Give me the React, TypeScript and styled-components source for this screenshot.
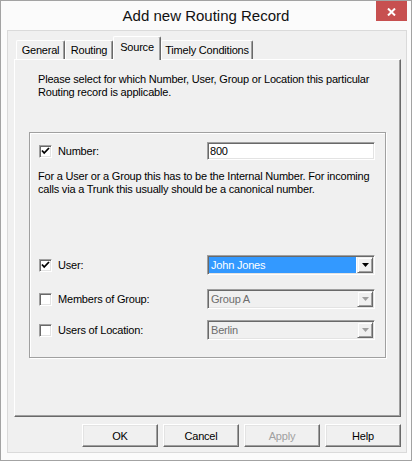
import React from "react";
import styled, { createGlobalStyle } from "styled-components";

const GlobalStyle = createGlobalStyle`
  html, body {
    margin: 0;
    padding: 0;
    background: #ffffff;
  }
  body {
    font-family: "Liberation Sans", Arial, sans-serif;
  }
`;

const Window = styled.div`
  position: relative;
  width: 412px;
  height: 461px;
  box-sizing: border-box;
  border: 1px solid #a3a3a3;
  background: #fbfbfb;
  display: flex;
  flex-direction: column;
  font-family: "Liberation Sans", Arial, sans-serif;
  font-size: 11px;
  letter-spacing: -0.2px;
  color: #000;
`;

const TitleBar = styled.div`
  flex: none;
  height: 29px;
  display: flex;
  align-items: center;
  justify-content: center;
  font-size: 15px;
  letter-spacing: 0;
  color: #111;
`;

const CloseButton = styled.div`
  position: absolute;
  top: 0;
  right: 4px;
  width: 31px;
  height: 20px;
  background: #c75050;
  display: flex;
  align-items: center;
  justify-content: center;
  padding-top: 2px;
  box-sizing: border-box;
`;

const Client = styled.div`
  flex: 1;
  margin: 0 4px 7px 6px;
  border: 1px solid #dadada;
  background: #f0f0f0;
  padding: 5px 5px 5px 6px;
  display: flex;
  flex-direction: column;
`;

const TabStrip = styled.div`
  flex: none;
  height: 23px;
  display: flex;
  align-items: flex-end;
  padding-left: 2px;
  position: relative;
  z-index: 1;
`;

const Tab = styled.div<{ $active?: boolean; $w: number }>`
  width: ${(p) => p.$w}px;
  height: ${(p) => (p.$active ? 24 : 19)}px;
  margin-bottom: ${(p) => (p.$active ? -1 : 0)}px;
  box-sizing: border-box;
  border-top: 1px solid #ffffff;
  border-left: 1px solid #ffffff;
  border-right: 1px solid #696969;
  border-radius: 2px 2px 0 0;
  box-shadow: inset -1px 0 #a0a0a0;
  background: #f0f0f0;
  display: flex;
  align-items: center;
  justify-content: center;
  padding-bottom: ${(p) => (p.$active ? 3 : 0)}px;
  white-space: nowrap;
`;

const Page = styled.div`
  flex: none;
  height: 358px;
  box-sizing: border-box;
  border-top: 1px solid #ffffff;
  border-left: 1px solid #ffffff;
  border-right: 1px solid #696969;
  border-bottom: 1px solid #696969;
  box-shadow: inset -1px -1px #a0a0a0;
  padding: 13px 14px 0 14px;
`;

const Text = styled.p<{ $ml?: number; $mt?: number }>`
  margin: ${(p) => p.$mt ?? 0}px 0 0 ${(p) => p.$ml ?? 0}px;
  line-height: 13px;
  white-space: nowrap;
`;

const GroupBox = styled.div`
  margin-top: 33px;
  border: 1px solid #a0a0a0;
  box-shadow: inset 1px 1px #ffffff, 1px 1px #ffffff;
  padding: 9px 10px 17px 9px;
`;

const Row = styled.div<{ $mt?: number }>`
  display: flex;
  align-items: center;
  margin-top: ${(p) => p.$mt ?? 0}px;
`;

const LabelSide = styled.label`
  flex: 1;
  display: flex;
  align-items: center;
  gap: 6px;
`;

const CheckBox = styled.span`
  width: 13px;
  height: 13px;
  box-sizing: border-box;
  border: 1px solid;
  border-color: #a0a0a0 #ffffff #ffffff #a0a0a0;
  box-shadow: inset 1px 1px #696969, inset -1px -1px #e3e3e3;
  background: #ffffff;
  display: flex;
  align-items: center;
  justify-content: center;
`;

const sunken = `
  box-sizing: border-box;
  border: 1px solid;
  border-color: #a0a0a0 #ffffff #ffffff #a0a0a0;
  box-shadow: inset 1px 1px #696969, inset -1px -1px #e3e3e3;
  padding: 1px;
`;

const TextField = styled.div`
  ${sunken}
  width: 168px;
  height: 18px;
  background: #ffffff;
  display: flex;
  align-items: center;
  padding-left: 2px;
`;

const Combo = styled.div<{ $disabled?: boolean }>`
  ${sunken}
  width: 168px;
  height: 20px;
  background: ${(p) => (p.$disabled ? "#f0f0f0" : "#ffffff")};
  display: flex;
  color: ${(p) => (p.$disabled ? "#6d6d6d" : "#000")};
`;

const ComboValue = styled.div<{ $selected?: boolean }>`
  flex: 1;
  display: flex;
  align-items: center;
  padding-left: 2px;
  margin-right: 1px;
  background: ${(p) => (p.$selected ? "#3399ff" : "transparent")};
  color: ${(p) => (p.$selected ? "#ffffff" : "inherit")};
`;

const DropButton = styled.div`
  width: 16px;
  height: 16px;
  box-sizing: border-box;
  border: 1px solid;
  border-color: #f0f0f0 #696969 #696969 #f0f0f0;
  box-shadow: inset 1px 1px #ffffff, inset -1px -1px #a0a0a0;
  background: #f0f0f0;
  display: flex;
  align-items: center;
  justify-content: center;
`;

const ButtonRow = styled.div`
  display: flex;
  justify-content: flex-end;
  gap: 5px;
  margin-top: 7px;
`;

const Button = styled.div<{ $disabled?: boolean }>`
  width: 76px;
  height: 23px;
  box-sizing: border-box;
  border: 1px solid;
  border-color: #ffffff #696969 #696969 #ffffff;
  box-shadow: inset -1px -1px #a0a0a0, inset 1px 1px #e3e3e3;
  background: #f0f0f0;
  display: flex;
  align-items: center;
  justify-content: center;
  color: ${(p) => (p.$disabled ? "#a0a0a0" : "#000")};
`;

const CheckMark = () => (
  <svg width="9" height="9" viewBox="0 0 9 9">
    <path d="M1 3.5 L3.2 6 L8 1" fill="none" stroke="#000" strokeWidth="1.8" />
  </svg>
);

const Arrow = ({ color }: { color: string }) => (
  <svg width="7" height="4" viewBox="0 0 7 4">
    <polygon points="0,0 7,0 3.5,4" fill={color} />
  </svg>
);

const CloseGlyph = () => (
  <svg width="9" height="8" viewBox="0 0 9 8">
    <path d="M1 0.5 L8 7.5 M8 0.5 L1 7.5" stroke="#fff" strokeWidth="2" />
  </svg>
);

type Choice = {
  label: string;
  value: string;
  checked: boolean;
  mt: number;
};

const choices: Choice[] = [
  { label: "User:", value: "John Jones", checked: true, mt: 59 },
  { label: "Members of Group:", value: "Group A", checked: false, mt: 14 },
  { label: "Users of Location:", value: "Berlin", checked: false, mt: 11 },
];

const tabs = [
  { label: "General", w: 49 },
  { label: "Routing", w: 48 },
  { label: "Source", w: 48, active: true },
  { label: "Timely Conditions", w: 92 },
];

export default function App() {
  return (
    <>
      <GlobalStyle />
      <Window>
        <TitleBar>Add new Routing Record</TitleBar>
        <CloseButton>
          <CloseGlyph />
        </CloseButton>
        <Client>
          <TabStrip>
            {tabs.map((t) => (
              <Tab key={t.label} $w={t.w} $active={t.active}>
                {t.label}
              </Tab>
            ))}
          </TabStrip>
          <Page>
            <Text $ml={9}>
              Please select for which Number, User, Group or Location this particular
              <br />
              Routing record is applicable.
            </Text>
            <GroupBox>
              <Row>
                <LabelSide>
                  <CheckBox>
                    <CheckMark />
                  </CheckBox>
                  Number:
                </LabelSide>
                <TextField>800</TextField>
              </Row>
              <Text $ml={-1} $mt={10}>
                For a User or a Group this has to be the Internal Number. For incoming
                <br />
                calls via a Trunk this usually should be a canonical number.
              </Text>
              {choices.map((c) => (
                <Row key={c.label} $mt={c.mt}>
                  <LabelSide>
                    <CheckBox>{c.checked && <CheckMark />}</CheckBox>
                    {c.label}
                  </LabelSide>
                  <Combo $disabled={!c.checked}>
                    <ComboValue $selected={c.checked}>{c.value}</ComboValue>
                    <DropButton>
                      <Arrow color={c.checked ? "#000" : "#a0a0a0"} />
                    </DropButton>
                  </Combo>
                </Row>
              ))}
            </GroupBox>
          </Page>
          <ButtonRow>
            <Button>OK</Button>
            <Button>Cancel</Button>
            <Button $disabled>Apply</Button>
            <Button>Help</Button>
          </ButtonRow>
        </Client>
      </Window>
    </>
  );
}
